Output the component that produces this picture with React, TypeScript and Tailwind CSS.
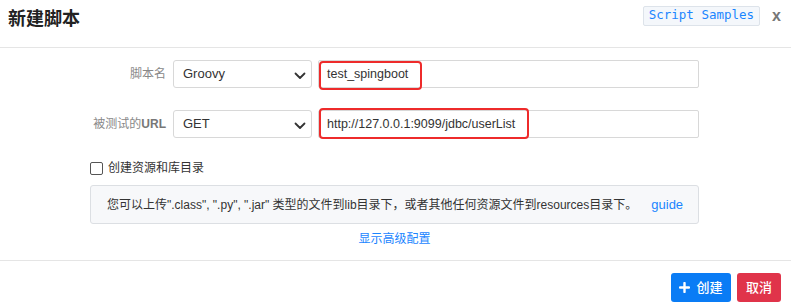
import React from "react";

const Chevron = () => (
  <svg width="12" height="8" viewBox="0 0 12 8" className="absolute right-[5px] top-[11px]">
    <path d="M1.5 1.5 L6 6 L10.5 1.5" fill="none" stroke="#333" strokeWidth="1.8" strokeLinecap="round" strokeLinejoin="round" />
  </svg>
);

export default function App() {
  return (
    <div
      className="w-[791px] h-[307px] bg-white text-[#333] overflow-hidden"
      style={{ fontFamily: '"Liberation Sans", "Noto Sans CJK SC", sans-serif' }}
    >
      {/* header */}
      <div className="h-[48px] border-b border-[#e5e5e5] flex items-center pl-[8px] pr-[10px]">
        <div className="text-[18px] font-semibold text-[#222] leading-none -mt-[10px]">新建脚本</div>
        <div className="ml-auto flex items-center -mt-[16px]">
          <div
            className="h-[20px] px-[5px] border border-[#dde3ea] bg-[#f4f7fb] rounded-[2px] text-[12.5px] text-[#1a85ff] flex items-center"
            style={{ fontFamily: '"DejaVu Sans Mono", monospace' }}
          >
            Script Samples
          </div>
          <div className="ml-[12px] text-[16px] font-bold text-[#777] leading-none">x</div>
        </div>
      </div>

      {/* body */}
      <div className="pl-[90px] pr-[92px] pt-[12px]">
        <div className="flex items-center h-[28px]">
          <div className="w-[83px] pr-[7px] text-right text-[12px] text-[#888]">脚本名</div>
          <div className="relative w-[139px] h-[28px] border border-[#d8d8d8] rounded-[3px] flex items-center pl-[9px] text-[13px] text-[#333]">
            Groovy
            <Chevron />
          </div>
          <div className="relative ml-[6px] flex-1 h-[28px] border border-[#d8d8d8] rounded-[2px] flex items-center pl-[8px] text-[12.5px] text-[#333]">
            test_spingboot
            <div className="absolute left-0 top-0 w-[103px] h-[29px] border-2 border-[#ee2b2b] rounded-[4px]" />
          </div>
        </div>

        <div className="flex items-center h-[28px] mt-[22px]">
          <div className="w-[83px] pr-[7px] text-right text-[12px] text-[#888] whitespace-nowrap">
            被测试的<span className="font-bold text-[#777]">URL</span>
          </div>
          <div className="relative w-[139px] h-[28px] border border-[#d8d8d8] rounded-[3px] flex items-center pl-[9px] text-[13px] text-[#333]">
            GET
            <Chevron />
          </div>
          <div className="relative ml-[6px] flex-1 h-[28px] border border-[#d8d8d8] rounded-[2px] flex items-center pl-[8px] text-[12.5px] text-[#333]">
            http://127.0.0.1:9099/jdbc/userList
            <div className="absolute left-0 -top-[3px] w-[210px] h-[31px] border-2 border-[#ee2b2b] rounded-[4px]" />
          </div>
        </div>

        <div className="flex items-center mt-[23px] h-[14px]">
          <div className="w-[13px] h-[13px] border border-[#555] rounded-[2px] bg-white" />
          <span className="ml-[5px] text-[12px] text-[#333]">创建资源和库目录</span>
        </div>

        <div className="mt-[10px] h-[39px] border border-[#dcdfe3] bg-[#f7f8fa] rounded-[3px] flex items-center pl-[16px] text-[12px] text-[#333]">
          <span>您可以上传".class", ".py", ".jar" 类型的文件到lib目录下，或者其他任何资源文件到resources目录下。</span>
          <span className="ml-[14px] text-[13px] text-[#1a85ff]">guide</span>
        </div>

        <div className="flex justify-center mt-[7px] h-[16px]">
          <span className="text-[12px] text-[#1a85ff] leading-[16px]">显示高级配置</span>
        </div>
      </div>

      {/* footer */}
      <div className="mt-[13px] border-t border-[#e5e5e5] flex justify-end pr-[10px] pt-[12px] gap-[6px]">
        <div className="h-[29px] w-[60px] bg-[#0a7cf5] rounded-[3px] text-white text-[13px] font-medium flex items-center justify-center">
          <svg width="11" height="11" viewBox="0 0 11 11" className="mr-[6px]">
            <path d="M5.5 1 V10 M1 5.5 H10" stroke="white" strokeWidth="2.4" strokeLinecap="round" />
          </svg>
          创建
        </div>
        <div className="h-[29px] w-[44px] bg-[#e0344a] rounded-[3px] text-white text-[13px] font-medium flex items-center justify-center">
          取消
        </div>
      </div>
    </div>
  );
}
